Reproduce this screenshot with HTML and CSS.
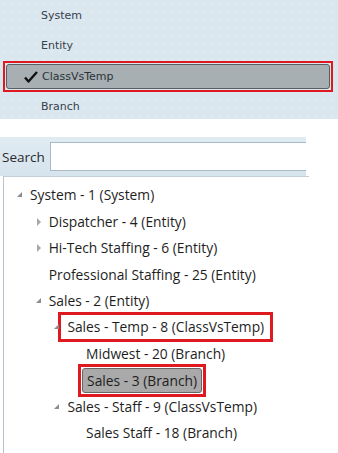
FILE: index.html
```html
<!DOCTYPE html>
<html lang="en">
<head>
    <meta charset="UTF-8">
    <title>Hierarchy</title>
    <link rel="stylesheet" href="styles.css">
</head>
<body>
<!-- 层级类型下拉菜单 -->
<div class="menu">
    <div class="menu-item">System</div>
    <div class="menu-item">Entity</div>
    <div class="menu-item picked">
        <div class="picked-inner">
            <svg class="check" width="14" height="12" viewBox="0 0 14 12"><path d="M1 6.5 L4.5 10.5 L13 1" fill="none" stroke="#111" stroke-width="2.4" stroke-linejoin="round"/></svg>ClassVsTemp
        </div>
    </div>
    <div class="menu-item">Branch</div>
</div>

<div class="gap"></div>

<!-- 搜索栏 -->
<div class="search-bar">
    <label class="search-label">Search</label>
    <input class="search-input" type="text">
</div>

<!-- 树 -->
<div class="tree">
    <ul class="root">
        <li><div class="row"><span class="tog open"></span><span class="txt">System - 1 (System)</span></div>
            <ul>
                <li><div class="row"><span class="tog shut"></span><span class="txt">Dispatcher - 4 (Entity)</span></div></li>
                <li><div class="row"><span class="tog shut"></span><span class="txt">Hi-Tech Staffing - 6 (Entity)</span></div></li>
                <li><div class="row"><span class="tog"></span><span class="txt">Professional Staffing - 25 (Entity)</span></div></li>
                <li><div class="row"><span class="tog open"></span><span class="txt">Sales - 2 (Entity)</span></div>
                    <ul>
                        <li><div class="row"><span class="tog open"></span><span class="txt marked">Sales - Temp - 8 (ClassVsTemp)</span></div>
                            <ul>
                                <li><div class="row"><span class="tog"></span><span class="txt">Midwest - 20 (Branch)</span></div></li>
                                <li><div class="row"><span class="tog"></span><span class="hl"><span class="txt sel">Sales - 3 (Branch)</span></span></div></li>
                            </ul>
                        </li>
                        <li><div class="row"><span class="tog open"></span><span class="txt">Sales - Staff - 9 (ClassVsTemp)</span></div>
                            <ul>
                                <li><div class="row"><span class="tog"></span><span class="txt">Sales Staff - 18 (Branch)</span></div></li>
                            </ul>
                        </li>
                    </ul>
                </li>
            </ul>
        </li>
    </ul>
</div>
</body>
</html>
```

FILE: styles.css
```css
*{
    margin: 0;
    padding: 0;
    box-sizing: border-box;
}
body{
    width: 338px;
    height: 453px;
    overflow: hidden;
    background: #fff;
    font-family: "Open Sans", "Noto Sans", sans-serif;
    color: #1e1e1e;
}

/* 上面的下拉菜单 */
.menu{
    height: 119px;
    padding-top: 1px;
    background-color: #dbe7ef;
    background-image: radial-gradient(circle, rgba(255,255,255,.22) 1px, transparent 1.6px);
    background-size: 8px 8px;
}
.menu-item{
    height: 30px;
    line-height: 30px;
    padding-left: 41px;
    font-family: "DejaVu Sans", sans-serif;
    font-size: 11px;
    color: #36414a;
}
.menu-item.picked{
    margin: 0 5px 0 3px;
    padding: 1px;
    height: 31px;
    border: 2px solid #e01820;
}
.picked-inner{
    height: 25px;
    display: flex;
    align-items: center;
    padding-left: 17px;
    border: 1px solid #5a5e60;
    border-radius: 3px;
    background: #a7afb2;
    color: #2a3238;
}
.check{
    margin-right: 4px;
}

.gap{
    height: 18px;
}

/* 搜索栏 */
.search-bar{
    width: 306px;
    height: 39px;
    display: flex;
    align-items: center;
    background: linear-gradient(#e0ebf2, #d6e4ee);
}
.search-label{
    width: 50px;
    padding-left: 2px;
    font-size: 13.5px;
    color: #2a2a2a;
}
.search-input{
    flex: 1;
    height: 29px;
    border: 1px solid #a9b9c6;
    border-right: none;
    background: #fff;
    outline: none;
}

/* 树 */
.tree{
    width: 306px;
    height: 280px;
    margin-left: 3px;
    padding-top: 5px;
    border-left: 1px solid #b9c3cc;
    border-top: 1px solid #c4ced6;
    font-size: 13.8px;
}
.tree ul{
    list-style: none;
    padding-left: 18.7px;
}
.tree ul.root{
    padding-left: 13px;
}
.row{
    height: 26.45px;
    display: flex;
    align-items: center;
    white-space: nowrap;
}
.tog{
    position: relative;
    flex: 0 0 13px;
    height: 10px;
}
.tog.open::before{
    content: "";
    position: absolute;
    left: 0;
    top: 2px;
    border-style: solid;
    border-width: 0 0 5px 5px;
    border-color: transparent transparent #8c8c8c transparent;
}
.tog.shut::before{
    content: "";
    position: absolute;
    left: 1px;
    top: 1px;
    border-style: solid;
    border-width: 4px 0 4px 4px;
    border-color: transparent transparent transparent #a8a8a8;
}
.txt{
    display: inline-block;
    line-height: 18px;
}
.txt.marked{
    padding: 0 3px;
    margin-left: -3px;
    outline: 3px solid #e01820;
    outline-offset: 3px;
}
.hl{
    display: inline-block;
    margin-left: -8px;
    padding: 1px;
    border: 3px solid #e01820;
}
.txt.sel{
    display: block;
    height: 25px;
    line-height: 23px;
    padding: 0 4px;
    border: 1px solid #666;
    border-radius: 3px;
    background: #a9a9a9;
}
```
